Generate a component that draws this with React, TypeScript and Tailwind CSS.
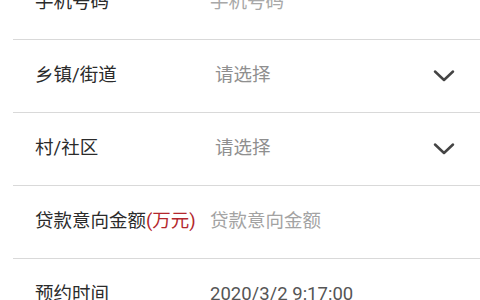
import React from "react";

function Chevron() {
  return (
    <svg width="24" height="16" viewBox="0 0 24 16" fill="none" className="shrink-0">
      <path d="M3 3.5 L12 12 L21 3.5" stroke="#444444" strokeWidth="2.5" strokeLinecap="round" strokeLinejoin="round" />
    </svg>
  );
}

type Row = {
  label: React.ReactNode;
  value: string;
  valueClass: string;
  select?: boolean;
  labelClass?: string;
};

const rows: Row[] = [
  { label: "手机号码", value: "手机号码", valueClass: "text-[#a8a8a8] pl-0" },
  { label: "乡镇/街道", value: "请选择", valueClass: "text-[#8f8f8f] pl-[5px]", select: true },
  { label: "村/社区", value: "请选择", valueClass: "text-[#8f8f8f] pl-[5px]", select: true, labelClass: "pl-[3px]" },
  {
    label: (
      <>
        贷款意向金额<span className="text-[#b3272d]">(万元)</span>
      </>
    ),
    value: "贷款意向金额",
    valueClass: "text-[#a3a3a3] pl-0",
  },
  { label: "预约时间", value: "2020/3/2 9:17:00", valueClass: "text-[#555555] pl-0" },
];

export default function App() {
  return (
    <div
      className="w-[480px] h-[300px] overflow-hidden bg-white"
      style={{ fontFamily: 'Roboto, "Noto Sans CJK SC", sans-serif' }}
    >
      <div className="-mt-[33px] pl-[13px]">
        {rows.map((r, i) => (
          <div key={i} className="h-[73px] flex items-center border-b-[1.5px] border-[#d9d9d9]">
            <div className={`w-[197px] shrink-0 pl-[22px] text-[18.5px] text-[#2b2b2b] whitespace-nowrap ${r.labelClass ?? ""}`}>
              {r.label}
            </div>
            <div className={`flex-1 text-[18.5px] whitespace-nowrap ${r.valueClass}`}>{r.value}</div>
            {r.select && (
              <div className="w-[24px] mr-[24px] flex items-center">
                <Chevron />
              </div>
            )}
          </div>
        ))}
      </div>
    </div>
  );
}
